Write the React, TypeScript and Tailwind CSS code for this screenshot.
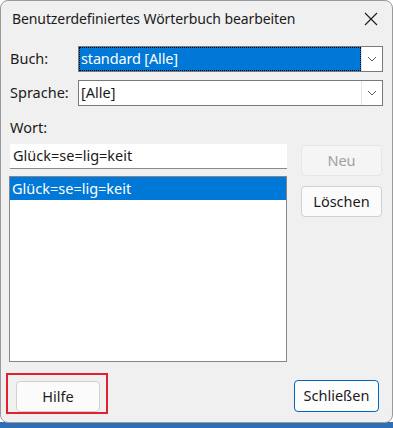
import React from "react";

const Chevron = () => (
  <svg width="10" height="6" viewBox="0 0 10 6" fill="none">
    <path d="M1 1 L5 5 L9 1" stroke="#5f5f5f" strokeWidth="1" />
  </svg>
);

export default function App() {
  const font = { fontFamily: '"Noto Sans", "Segoe UI", sans-serif' };
  return (
    <div className="w-[393px] h-[428px] bg-white relative overflow-hidden" style={font}>
      <div className="absolute left-0 right-0 bottom-0 h-[6px] bg-[#2f6db5]" />
      <div className="relative w-[393px] h-[423px] bg-[#f0f0f0] border border-[#9a9a9a] rounded-[8px] flex flex-col text-[#1b1b1b]">
        {/* title bar */}
        <div className="h-[35px] flex items-center justify-between pl-[11px] pr-[14px]">
          <span className="text-[14px] tracking-[-0.1px]">Benutzerdefiniertes Wörterbuch bearbeiten</span>
          <svg width="14" height="14" viewBox="0 0 14 14" fill="none">
            <path d="M1 1 L13 13 M13 1 L1 13" stroke="#1b1b1b" strokeWidth="1.1" />
          </svg>
        </div>
        {/* Buch */}
        <div className="flex items-center mt-[10px] pl-[9px]">
          <span className="w-[68px] text-[14.5px]">Buch:</span>
          <div className="w-[305px] h-[26px] border border-[#7a7a7a] bg-white flex">
            <div className="flex-1 bg-[#0078d7] border border-dotted border-black flex items-center pl-[1px] text-white text-[14.5px] tracking-[-0.15px]">
              standard [Alle]
            </div>
            <div className="w-[21px] flex items-center justify-center border-l border-[#e5e5e5]">
              <Chevron />
            </div>
          </div>
        </div>
        {/* Sprache */}
        <div className="flex items-center mt-[8px] pl-[9px]">
          <span className="w-[68px] text-[14.5px]">Sprache:</span>
          <div className="w-[305px] h-[26px] border border-[#7a7a7a] bg-white flex">
            <div className="flex-1 flex items-center pl-[2px] text-[14.5px]">[Alle]</div>
            <div className="w-[21px] flex items-center justify-center border-l border-[#e5e5e5]">
              <Chevron />
            </div>
          </div>
        </div>
        {/* Wort */}
        <div className="mt-[12px] pl-[9px] h-[20px] flex items-center text-[14.5px]">Wort:</div>
        <div className="flex mt-[6px] pl-[8px]">
          <div className="w-[278px] flex flex-col">
            <div className="ml-[1px] w-[277px] h-[25px] bg-white border-b border-[#8a8a8a] flex items-center pl-[3px] text-[14.5px]">
              Glück=se=lig=keit
            </div>
            <div className="mt-[7px] w-[278px] h-[186px] bg-white border border-[#82878d]">
              <div className="h-[23px] bg-[#0078d7] text-white text-[14.5px] flex items-center pl-[2px]">
                Glück=se=lig=keit
              </div>
            </div>
          </div>
          <div className="ml-[14px] flex flex-col">
            <div className="mt-[1px] w-[81px] h-[31px] rounded-[4px] border border-[#e6e6e6] bg-[#f5f5f5] text-[#a0a0a0] text-[14.5px] flex items-center justify-center">
              Neu
            </div>
            <div className="mt-[10px] w-[81px] h-[31px] rounded-[4px] border border-[#d0d0d0] bg-[#fbfbfb] text-[14.5px] flex items-center justify-center">
              Löschen
            </div>
          </div>
        </div>
        {/* bottom */}
        <div className="flex items-start justify-between mt-[11px] pl-[5px] pr-[13px]">
          <div className="w-[102px] h-[41px] border-2 border-[#e3202e] pt-[6px] pl-[8px]">
            <div className="w-[84px] h-[31px] rounded-[4px] border border-[#d0d0d0] bg-[#fbfbfb] text-[14.5px] flex items-center justify-center">
              Hilfe
            </div>
          </div>
          <div className="mt-[7px] w-[85px] h-[32px] rounded-[4px] border border-[#0067c0] bg-[#fdfdfd] text-[14.5px] flex items-center justify-center">
            Schließen
          </div>
        </div>
      </div>
    </div>
  );
}
